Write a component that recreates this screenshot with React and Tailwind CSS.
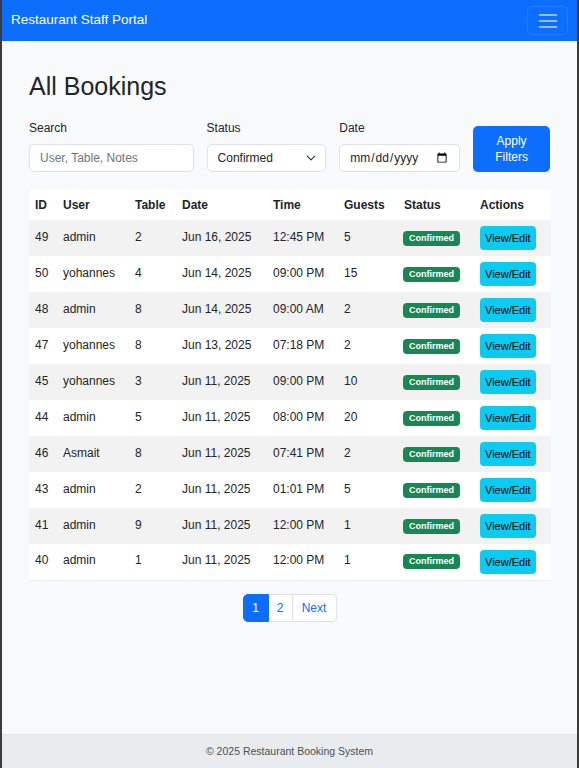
const bookings = [
  { id: 49, user: 'admin', table: 2, date: 'Jun 16, 2025', time: '12:45 PM', guests: 5 },
  { id: 50, user: 'yohannes', table: 4, date: 'Jun 14, 2025', time: '09:00 PM', guests: 15 },
  { id: 48, user: 'admin', table: 8, date: 'Jun 14, 2025', time: '09:00 AM', guests: 2 },
  { id: 47, user: 'yohannes', table: 8, date: 'Jun 13, 2025', time: '07:18 PM', guests: 2 },
  { id: 45, user: 'yohannes', table: 3, date: 'Jun 11, 2025', time: '09:00 PM', guests: 10 },
  { id: 44, user: 'admin', table: 5, date: 'Jun 11, 2025', time: '08:00 PM', guests: 20 },
  { id: 46, user: 'Asmait', table: 8, date: 'Jun 11, 2025', time: '07:41 PM', guests: 2 },
  { id: 43, user: 'admin', table: 2, date: 'Jun 11, 2025', time: '01:01 PM', guests: 5 },
  { id: 41, user: 'admin', table: 9, date: 'Jun 11, 2025', time: '12:00 PM', guests: 1 },
  { id: 40, user: 'admin', table: 1, date: 'Jun 11, 2025', time: '12:00 PM', guests: 1 },
];

export default function App() {
  return (
    <div className="min-h-screen flex flex-col bg-[#f8f9fa] border-x-2 border-[#3c3c3c] text-[#212529] font-['Liberation_Sans',Arial,sans-serif]">
      {/* Navbar */}
      <nav className="h-[41px] bg-[#0d6efd] flex items-center justify-between pl-[9px] pr-[9px]">
        <span className="text-[13.5px] text-white">Restaurant Staff Portal</span>
        <button className="w-[41px] h-[29px] border border-white/10 rounded-[5px] flex flex-col items-center justify-center gap-[4px]">
          <span className="block w-[18px] h-[2px] bg-white/55" />
          <span className="block w-[18px] h-[2px] bg-white/55" />
          <span className="block w-[18px] h-[2px] bg-white/55" />
        </button>
      </nav>

      <main className="flex-1 px-[27px] pt-[30px]">
        <h2 className="text-[25px] leading-[30px] font-normal">All Bookings</h2>

        {/* Filters */}
        <div className="flex items-end gap-[13px] mt-[18px] text-[12px]">
          <div className="w-[165px]">
            <label className="block mb-[7px]">Search</label>
            <input
              placeholder="User, Table, Notes"
              className="w-full h-[28px] bg-white border border-[#dee2e6] rounded-[5px] px-[10px] placeholder:text-[#6c757d] outline-none"
            />
          </div>
          <div className="w-[120px]">
            <label className="block mb-[7px]">Status</label>
            <div className="h-[28px] bg-white border border-[#dee2e6] rounded-[5px] pl-[10px] pr-[9px] flex items-center justify-between">
              <span>Confirmed</span>
              <svg width="10" height="10" viewBox="0 0 16 16" fill="none" stroke="#343a40" strokeWidth="2" strokeLinecap="round" strokeLinejoin="round">
                <path d="M2 5l6 6 6-6" />
              </svg>
            </div>
          </div>
          <div className="w-[121px]">
            <label className="block mb-[7px]">Date</label>
            <input
              type="date"
              className="w-full h-[28px] bg-white border border-[#dee2e6] rounded-[5px] px-[9px] text-[12px] outline-none"
            />
          </div>
          <button className="w-[77px] h-[46px] ml-auto bg-[#0d6efd] text-white rounded-[5px] leading-[16px]">
            Apply
            <br />
            Filters
          </button>
        </div>

        {/* Table */}
        <table className="w-full table-fixed mt-[18px] text-[12px] text-left border-b border-[#e9ecef]">
          <thead>
            <tr className="bg-white h-[30px] font-bold">
              <th className="w-[28px] pl-[6px]">ID</th>
              <th className="w-[72px] pl-[6px]">User</th>
              <th className="w-[47px] pl-[6px]">Table</th>
              <th className="w-[91px] pl-[6px]">Date</th>
              <th className="w-[71px] pl-[6px]">Time</th>
              <th className="w-[60px] pl-[6px]">Guests</th>
              <th className="w-[76px] pl-[6px]">Status</th>
              <th className="w-[77px] pl-[6px]">Actions</th>
            </tr>
          </thead>
          <tbody>
            {bookings.map((b, i) => (
              <tr key={b.id} className={`h-[36px] ${i % 2 === 0 ? 'bg-[#f2f2f2]' : 'bg-white'}`}>
                <td className="pl-[6px] pb-[3px]">{b.id}</td>
                <td className="pl-[6px] pb-[3px]">{b.user}</td>
                <td className="pl-[6px] pb-[3px]">{b.table}</td>
                <td className="pl-[6px] pb-[3px]">{b.date}</td>
                <td className="pl-[6px] pb-[3px]">{b.time}</td>
                <td className="pl-[6px] pb-[3px]">{b.guests}</td>
                <td className="pl-[5px] pb-[3px]">
                  <span className="inline-block h-[15px] leading-[15px] px-[6px] rounded-[4px] bg-[#198754] text-white text-[9px] font-bold">
                    Confirmed
                  </span>
                </td>
                <td className="pl-[6px]">
                  <button className="h-[24px] px-[5px] rounded-[4px] bg-[#0dcaf0] text-black text-[11px]">
                    View/Edit
                  </button>
                </td>
              </tr>
            ))}
          </tbody>
        </table>

        {/* Pagination */}
        <div className="flex justify-center mt-[13px] text-[12px]">
          <div className="flex h-[28px]">
            <span className="w-[26px] flex items-center justify-center bg-[#0d6efd] text-white border border-[#0d6efd] rounded-l-[5px]">1</span>
            <span className="w-[24px] flex items-center justify-center bg-white text-[#0d6efd] border-y border-r border-[#dee2e6]">2</span>
            <span className="w-[44px] flex items-center justify-center bg-white text-[#0d6efd] border-y border-r border-[#dee2e6] rounded-r-[5px]">Next</span>
          </div>
        </div>
      </main>

      {/* Footer */}
      <footer className="h-[34px] bg-[#e9ecef] border-t border-[#dee2e6] flex items-center justify-center text-[10.5px] text-[#495057]">
        © 2025 Restaurant Booking System
      </footer>
    </div>
  );
}
